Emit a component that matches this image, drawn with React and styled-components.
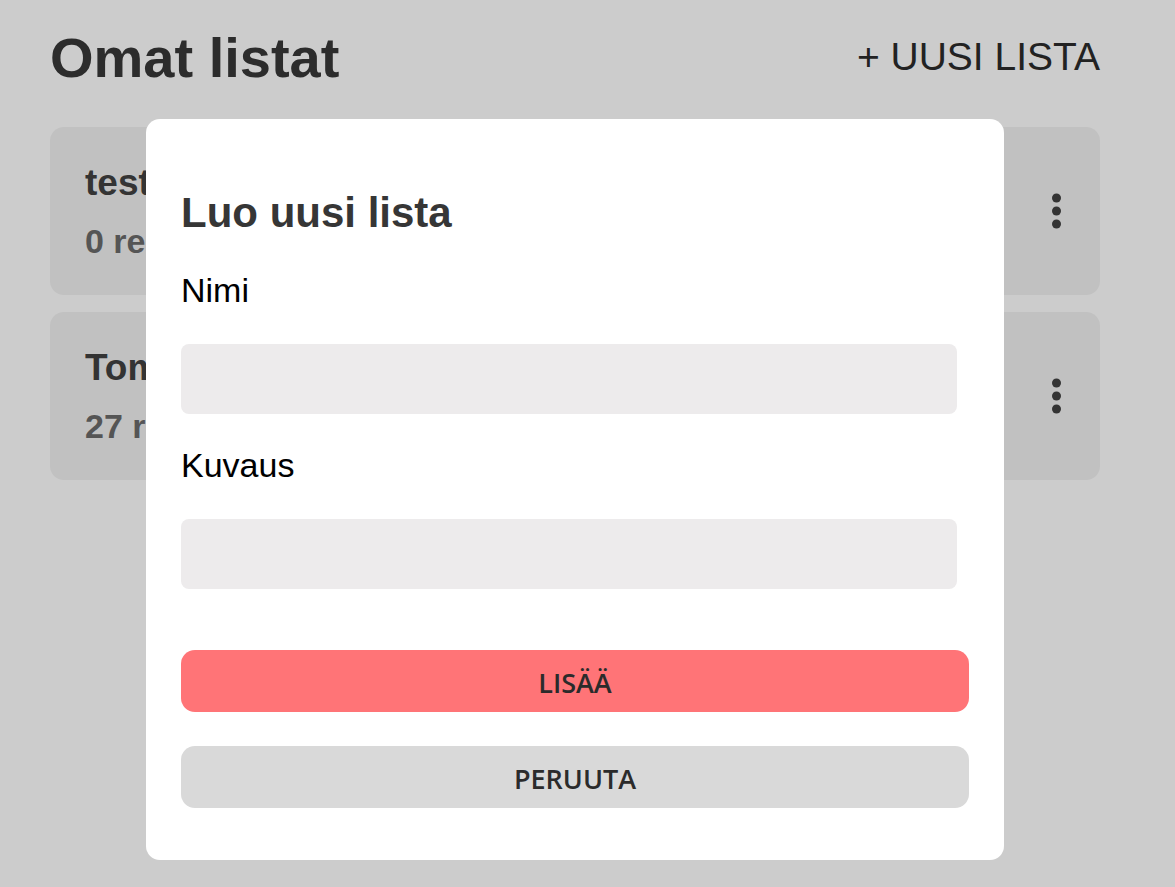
import React from "react";
import styled, { createGlobalStyle } from "styled-components";

const GlobalStyle = createGlobalStyle`
  * { box-sizing: border-box; }
  body {
    margin: 0;
    background: #ffffff;
    font-family: "Liberation Sans", Arial, sans-serif;
  }
  h1, h2, h3, p, ul { margin: 0; padding: 0; }
`;

const Page = styled.main`
  padding: 25px 75px 25px 50px;
`;

const Header = styled.header`
  display: flex;
  justify-content: space-between;
  align-items: flex-start;
  margin-bottom: 36px;
`;

const PageTitle = styled.h1`
  font-size: 56px;
  line-height: 66px;
  color: #373737;
`;

const NewListButton = styled.button`
  padding: 0;
  border: 0;
  background: none;
  font-family: inherit;
  font-size: 39px;
  line-height: 64px;
  color: #2b2b2b;
  cursor: pointer;
`;

const Lists = styled.ul`
  display: flex;
  flex-direction: column;
  gap: 17px;
  list-style: none;
`;

const ListCard = styled.li`
  display: flex;
  justify-content: space-between;
  align-items: center;
  padding: 26px 35px;
  border-radius: 14px;
  background: #f2f2f2;
`;

const ListName = styled.h3`
  font-size: 37px;
  line-height: 60px;
  color: #414141;
`;

const RecipeCount = styled.p`
  font-size: 34px;
  line-height: 56px;
  font-weight: bold;
  color: #6b6b6b;
`;

const MenuButton = styled.button`
  display: flex;
  padding: 0 4px;
  border: 0;
  background: none;
  color: #414141;
  cursor: pointer;
`;

const Overlay = styled.div`
  position: fixed;
  inset: 0;
  display: flex;
  align-items: flex-start;
  padding: 119px 171px 0 146px;
  background: rgba(0, 0, 0, 0.2);
  overflow-y: auto;
`;

const Dialog = styled.form`
  display: flex;
  flex-direction: column;
  flex: 1;
  padding: 70px 35px 52px;
  border-radius: 14px;
  background: #ffffff;
`;

const DialogTitle = styled.h2`
  margin-bottom: 2px;
  font-size: 42px;
  line-height: 48px;
  color: #363636;
`;

const Field = styled.div`
  display: flex;
  flex-direction: column;
  gap: 34px;
  padding: 31px 12px 0 0;
`;

const Label = styled.label`
  font-size: 34px;
  line-height: 40px;
  color: #000000;
`;

const TextInput = styled.input`
  width: 100%;
  height: 70px;
  padding: 0 16px;
  border: 0;
  border-radius: 8px;
  background: #edebec;
  font-family: inherit;
  font-size: 34px;
`;

const Actions = styled.div`
  display: flex;
  flex-direction: column;
  gap: 34px;
  padding-top: 61px;
`;

const ActionButton = styled.button`
  height: 62px;
  padding: 2px 0 0;
  border: 0;
  border-radius: 14px;
  background: ${({ $primary }) => ($primary ? "#ff7477" : "#d9d9d9")};
  font-family: "Open Sans", "Noto Sans", sans-serif;
  font-size: 27px;
  font-weight: 600;
  color: #2b2b2b;
  cursor: pointer;
`;

const lists = [
  { name: "testi", count: 0 },
  { name: "Tomi", count: 27 },
];

function DotsIcon() {
  return (
    <svg width="9" height="36" viewBox="0 0 9 36" fill="currentColor" aria-hidden="true">
      <circle cx="4.5" cy="5" r="4.5" />
      <circle cx="4.5" cy="18" r="4.5" />
      <circle cx="4.5" cy="31" r="4.5" />
    </svg>
  );
}

export default function App() {
  return (
    <>
      <GlobalStyle />
      <Page>
        <Header>
          <PageTitle>Omat listat</PageTitle>
          <NewListButton type="button">+ UUSI LISTA</NewListButton>
        </Header>
        <Lists>
          {lists.map((list) => (
            <ListCard key={list.name}>
              <div>
                <ListName>{list.name}</ListName>
                <RecipeCount>{list.count} reseptiä</RecipeCount>
              </div>
              <MenuButton type="button" aria-label="Valikko">
                <DotsIcon />
              </MenuButton>
            </ListCard>
          ))}
        </Lists>
      </Page>
      <Overlay>
        <Dialog role="dialog" aria-modal="true" aria-labelledby="dialog-title">
          <DialogTitle id="dialog-title">Luo uusi lista</DialogTitle>
          <Field>
            <Label htmlFor="name">Nimi</Label>
            <TextInput id="name" type="text" />
          </Field>
          <Field>
            <Label htmlFor="description">Kuvaus</Label>
            <TextInput id="description" type="text" />
          </Field>
          <Actions>
            <ActionButton type="button" $primary>LISÄÄ</ActionButton>
            <ActionButton type="button">PERUUTA</ActionButton>
          </Actions>
        </Dialog>
      </Overlay>
    </>
  );
}
